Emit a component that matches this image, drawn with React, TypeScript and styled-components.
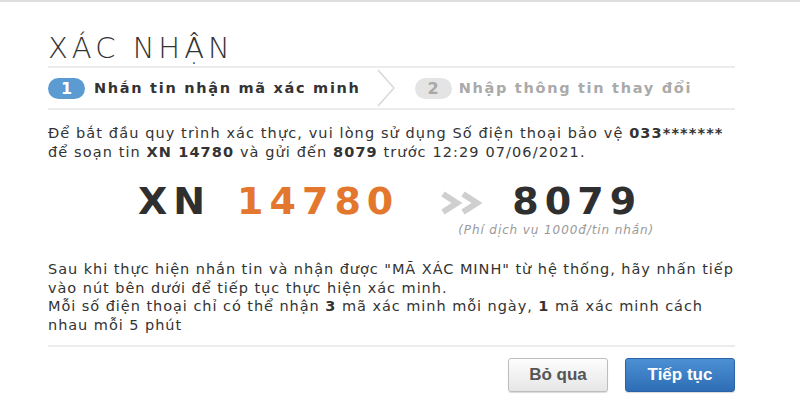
import React from 'react';
import styled, { createGlobalStyle } from 'styled-components';

const GlobalStyle = createGlobalStyle`
  html, body {
    margin: 0;
    padding: 0;
    background: #fff;
  }
  body {
    font-family: 'DejaVu Sans', Verdana, sans-serif;
    color: #333;
  }
`;

const Page = styled.div`
  width: 800px;
  height: 400px;
  box-sizing: border-box;
  border-top: 2px solid #dedede;
  padding: 0 65px 0 48px;
  overflow: hidden;
`;

const Title = styled.h1`
  margin: 0;
  padding-top: 28px;
  height: 36px;
  font-family: 'DejaVu Sans', sans-serif;
  font-weight: 200;
  font-size: 29px;
  letter-spacing: 4px;
  line-height: 36px;
  color: #333;
`;

const Divider = styled.div`
  height: 2px;
  background: #ececec;
`;

const Steps = styled.div`
  display: flex;
  align-items: center;
  height: 40px;
`;

const StepNum = styled.span<{ $active?: boolean }>`
  display: inline-flex;
  align-items: center;
  justify-content: center;
  width: 37px;
  height: 21px;
  border-radius: 11px;
  background: ${(p) => (p.$active ? '#5b9bd2' : '#e4e4e4')};
  color: ${(p) => (p.$active ? '#fff' : '#a8a8a8')};
  font-weight: bold;
  font-size: 16px;
`;

const StepLabel = styled.span<{ $active?: boolean }>`
  margin-left: ${(p) => (p.$active ? '9px' : '7px')};
  font-weight: bold;
  font-size: 14.5px;
  letter-spacing: 1.7px;
  color: ${(p) => (p.$active ? '#333' : '#aaa')};
`;

const StepArrow = styled.svg`
  margin: 0 20px 0 16px;
`;

const Text = styled.p`
  margin: 0;
  font-size: 14.5px;
  letter-spacing: 1.1px;
  line-height: 19px;
  color: #333;
  white-space: nowrap;
`;

const Intro = styled(Text)`
  padding-top: 14px;
`;

const Big = styled.div`
  display: flex;
  align-items: flex-start;
  padding: 21px 0 0 90px;
  height: 75px;
`;

const BigText = styled.span<{ $tone?: 'orange' }>`
  font-family: 'DejaVu Sans', Verdana, sans-serif;
  font-weight: bold;
  font-size: 38px;
  line-height: 37px;
  letter-spacing: 6px;
  color: ${(p) => (p.$tone === 'orange' ? '#e2772d' : '#2f2f2f')};
  white-space: pre;
`;

const Code = styled(BigText)`
  margin-left: 26px;
`;

const BigArrow = styled.svg`
  margin: 8px 29px 0 41px;
`;

const Dest = styled.div`
  display: flex;
  flex-direction: column;
  align-items: flex-end;
`;

const Fee = styled.span`
  font-style: italic;
  font-size: 12px;
  line-height: 12px;
  letter-spacing: 0.9px;
  color: #999;
  margin: 4px -12px 0 -90px;
  white-space: nowrap;
`;

const Notes = styled(Text)`
  padding-top: 2px;
  height: 85px;
  line-height: 18.5px;
  letter-spacing: 0.95px;
`;

const Actions = styled.div`
  display: flex;
  justify-content: flex-end;
  gap: 17px;
  padding-top: 11px;
`;

const Button = styled.button<{ $primary?: boolean }>`
  height: 34px;
  padding: 0;
  width: ${(p) => (p.$primary ? '110px' : '100px')};
  border-radius: 3px;
  font-family: 'Liberation Sans', Arial, sans-serif;
  font-weight: bold;
  font-size: 17px;
  cursor: pointer;
  border: 1px solid ${(p) => (p.$primary ? '#2a64a8' : '#bdbdbd')};
  color: ${(p) => (p.$primary ? '#fff' : '#555')};
  background: ${(p) =>
    p.$primary
      ? 'linear-gradient(#4d90d3, #2d6db5)'
      : 'linear-gradient(#fdfdfd, #e6e6e6)'};
  box-shadow: 0 1px 1px rgba(0, 0, 0, 0.15);
`;

export default function App() {
  return (
    <>
      <GlobalStyle />
      <Page>
        <Title>XÁC NHẬN</Title>
        <Divider />
        <Steps>
          <StepNum $active>1</StepNum>
          <StepLabel $active>Nhắn tin nhận mã xác minh</StepLabel>
          <StepArrow width="18" height="38" viewBox="0 0 18 38">
            <polyline points="1,1 17,19 1,37" fill="none" stroke="#d8d8d8" strokeWidth="1.5" />
          </StepArrow>
          <StepNum>2</StepNum>
          <StepLabel>Nhập thông tin thay đổi</StepLabel>
        </Steps>
        <Divider />
        <Intro>
          Để bắt đầu quy trình xác thực, vui lòng sử dụng Số điện thoại bảo vệ <b>033*******</b>
          <br />
          để soạn tin <b>XN 14780</b> và gửi đến <b>8079</b> trước 12:29 07/06/2021.
        </Intro>
        <Big>
          <BigText>XN</BigText>
          <Code $tone="orange">14780</Code>
          <BigArrow width="43" height="24" viewBox="0 0 43 24">
            <polyline points="3,3 17,12 3,21" fill="none" stroke="#cfcfcf" strokeWidth="6" />
            <polyline points="23,3 37,12 23,21" fill="none" stroke="#cfcfcf" strokeWidth="6" />
          </BigArrow>
          <Dest>
            <BigText>8079</BigText>
            <Fee>(Phí dịch vụ 1000đ/tin nhắn)</Fee>
          </Dest>
        </Big>
        <Notes>
          Sau khi thực hiện nhắn tin và nhận được "MÃ XÁC MINH" từ hệ thống, hãy nhấn tiếp
          <br />
          vào nút bên dưới để tiếp tục thực hiện xác minh.
          <br />
          Mỗi số điện thoại chỉ có thể nhận <b>3</b> mã xác minh mỗi ngày, <b>1</b> mã xác minh cách
          <br />
          nhau mỗi 5 phút
        </Notes>
        <Divider />
        <Actions>
          <Button>Bỏ qua</Button>
          <Button $primary>Tiếp tục</Button>
        </Actions>
      </Page>
    </>
  );
}
